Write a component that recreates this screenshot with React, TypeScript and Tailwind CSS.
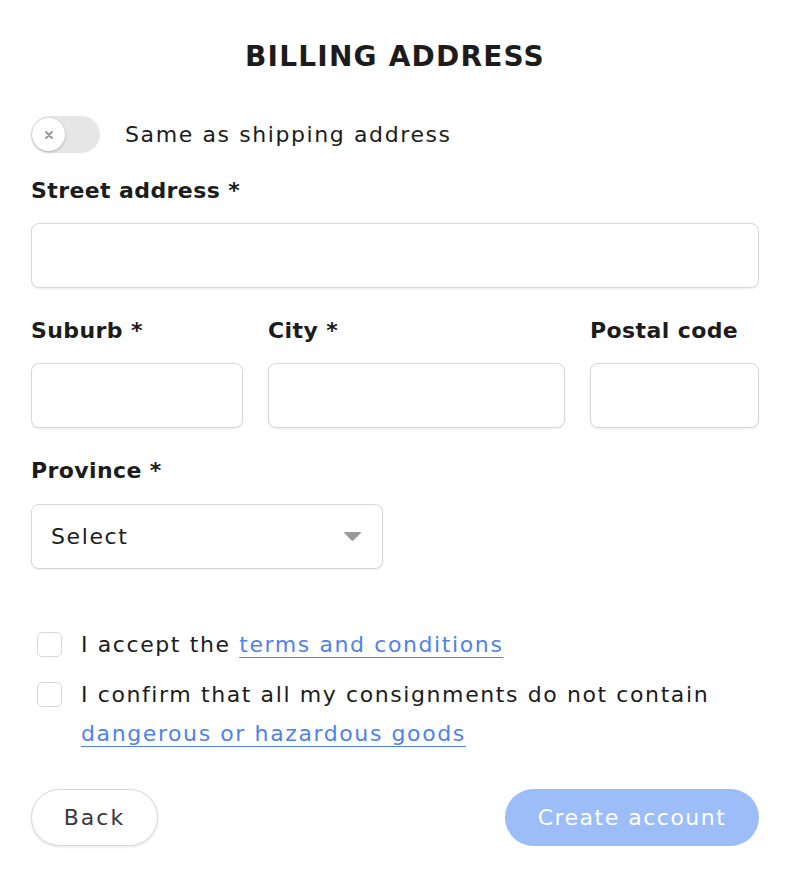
import React from "react";

const font = "font-['DejaVu_Sans',sans-serif]";

const Field = ({ label, className }: { label: string; className?: string }) => (
  <div className={`flex flex-col ${className || ""}`}>
    <label className="text-[22px] leading-[28px] font-bold tracking-[0.4px] text-[#1c1c1c] whitespace-nowrap">
      {label}
    </label>
    <input className="mt-[18px] h-[65px] w-full rounded-[8px] border border-[#d8d8d8] bg-white shadow-[0_1px_2px_rgba(0,0,0,0.08)] outline-none" />
  </div>
);

export default function App() {
  return (
    <div className={`min-h-screen w-[790px] bg-white px-[31px] pt-[40px] ${font}`}>
      {/* Title */}
      <h1 className="text-center text-[28px] leading-[34px] font-bold tracking-[1.2px] text-[#1c1c1c]">
        BILLING ADDRESS
      </h1>

      {/* Toggle */}
      <div className="mt-[42px] flex items-center gap-[25px]">
        <div className="relative h-[37px] w-[69px] rounded-full bg-[#e6e6e6]">
          <div className="absolute left-[1px] top-[2px] flex h-[33px] w-[33px] items-center justify-center rounded-full bg-white shadow-[0_1px_3px_rgba(0,0,0,0.25)]">
            <svg width="10" height="10" viewBox="0 0 10 10">
              <path d="M2 2 L8 8 M8 2 L2 8" stroke="#9a9a9a" strokeWidth="2" strokeLinecap="round" />
            </svg>
          </div>
        </div>
        <span className="text-[22px] leading-[28px] tracking-[1.6px] text-[#1c1c1c]">Same as shipping address</span>
      </div>

      {/* Street */}
      <Field label="Street address *" className="mt-[24px]" />

      {/* Suburb / City / Postal */}
      <div className="mt-[29px] flex gap-[25px]">
        <Field label="Suburb *" className="w-[212px]" />
        <Field label="City *" className="w-[297px]" />
        <Field label="Postal code" className="w-[169px]" />
      </div>

      {/* Province */}
      <div className="mt-[29px] flex flex-col">
        <label className="text-[22px] leading-[28px] font-bold tracking-[0.4px] text-[#1c1c1c]">Province *</label>
        <div className="mt-[19px] flex h-[65px] w-[352px] items-center justify-between rounded-[8px] border border-[#d8d8d8] bg-white pl-[19px] pr-[20px] shadow-[0_1px_2px_rgba(0,0,0,0.08)]">
          <span className="text-[22px] tracking-[1.6px] text-[#1c1c1c]">Select</span>
          <svg width="19" height="11" viewBox="0 0 19 11">
            <path d="M1.5 1 H17.5 Q18.8 1 17.8 2 L10.5 9.6 Q9.5 10.5 8.5 9.6 L1.2 2 Q0.2 1 1.5 1 Z" fill="#9a9a9a" />
          </svg>
        </div>
      </div>

      {/* Checkboxes */}
      <div className="mt-[56px] flex items-start gap-[19px] pl-[6px]">
        <span className="mt-[7px] h-[25px] w-[25px] shrink-0 rounded-[5px] border border-[#d8d8d8] bg-white" />
        <p className="text-[22px] leading-[39px] tracking-[1.6px] text-[#1c1c1c]">
          I accept the{" "}
          <a href="#" className="text-[#4f82ec] underline decoration-1 underline-offset-[5px]">
            terms and conditions
          </a>
        </p>
      </div>
      <div className="mt-[11px] flex items-start gap-[19px] pl-[6px]">
        <span className="mt-[7px] h-[25px] w-[25px] shrink-0 rounded-[5px] border border-[#d8d8d8] bg-white" />
        <p className="text-[22px] leading-[39px] tracking-[1.6px] text-[#1c1c1c]">
          I confirm that all my consignments do not contain
          <br />
          <a href="#" className="text-[#4f82ec] underline decoration-1 underline-offset-[5px]">
            dangerous or hazardous goods
          </a>
        </p>
      </div>

      {/* Buttons */}
      <div className="mt-[36px] flex items-center justify-between">
        <button className="h-[57px] w-[127px] rounded-full border border-[#d8d8d8] bg-white text-[22px] tracking-[2px] text-[#3a3a3a] shadow-[0_1px_3px_rgba(0,0,0,0.12)]">
          Back
        </button>
        <button className="h-[57px] w-[254px] rounded-full bg-[#9dbdf9] text-[22px] tracking-[1.5px] text-white">
          Create account
        </button>
      </div>
    </div>
  );
}
